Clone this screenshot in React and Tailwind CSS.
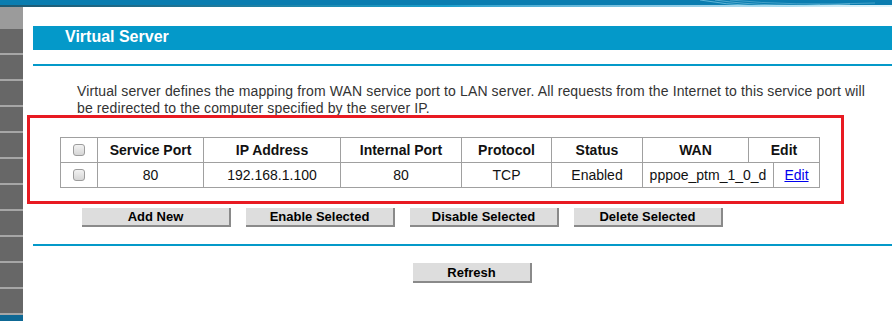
import React from "react";

const headCols = [
  { w: "w-[37px]", label: null },
  { w: "w-[106px]", label: "Service Port" },
  { w: "w-[137px]", label: "IP Address" },
  { w: "w-[121px]", label: "Internal Port" },
  { w: "w-[90px]", label: "Protocol" },
  { w: "w-[91px]", label: "Status" },
  { w: "w-[106px]", label: "WAN" },
  { w: "w-[71px]", label: "Edit" },
];

const rowCols = [
  { w: "w-[37px]", label: null },
  { w: "w-[106px]", label: "80" },
  { w: "w-[137px]", label: "192.168.1.100" },
  { w: "w-[121px]", label: "80" },
  { w: "w-[90px]", label: "TCP" },
  { w: "w-[91px]", label: "Enabled" },
  { w: "w-[131px]", label: "pppoe_ptm_1_0_d" },
  { w: "w-[46px]", label: "edit" },
];

const Check = () => (
  <div className="w-[12px] h-[12px] rounded-[3px] border border-[#9c9c9c] bg-gradient-to-b from-[#f2f2f2] to-[#d6d6d6]" />
);

const Cell = ({ w, label, bold }) => (
  <div
    className={`${w} h-[25px] shrink-0 flex items-center justify-center border-r border-b border-[#a0a0a0] text-[14px] text-[#111] ${
      bold ? "font-bold" : ""
    }`}
  >
    {label === null ? (
      <Check />
    ) : label === "edit" ? (
      <a href="#" className="text-[#0000ee] underline">
        Edit
      </a>
    ) : (
      label
    )}
  </div>
);

const Btn = ({ children, w = "w-[149px]", h = "h-[19px]" }) => (
  <button
    className={`${w} ${h} bg-[#dddddd] border-r-2 border-b-2 border-[#8a8a8a] text-[13px] font-bold text-black leading-none flex items-center justify-center`}
  >
    {children}
  </button>
);

const App = () => {
  const sideCells = Array.from({ length: 11 });

  return (
    <div className="w-[892px] h-[321px] relative overflow-hidden bg-white font-['Liberation_Sans',Arial,sans-serif]">
      {/* top banner */}
      <div className="relative h-[7px]">
        <div className="h-[5px] bg-[#0a7db0]" />
        <div className="h-[2px] bg-gradient-to-r from-[#1e5870] via-[#1a9fcc] to-[#e2f5fb]" />
        <svg
          className="absolute left-[690px] top-0"
          width="190"
          height="7"
          viewBox="0 0 190 7"
        >
          <path d="M10 0 Q60 9 130 5" stroke="#8fd6ee" strokeWidth="0.8" fill="none" opacity="0.8" />
          <path d="M25 0 Q80 8 160 4" stroke="#b8e7f6" strokeWidth="0.6" fill="none" opacity="0.7" />
          <path d="M40 0 Q100 6 185 3" stroke="#a8e0f3" strokeWidth="0.6" fill="none" opacity="0.6" />
        </svg>
      </div>

      <div className="flex">
        {/* left menu strip */}
        <div className="w-[23px] shrink-0 flex flex-col">
          <div className="h-[22px] bg-[#9b9b9b]" />
          {sideCells.map((_, i) => (
            <React.Fragment key={i}>
              <div className="h-[24px] bg-[#676767]" />
              <div className="h-[2px] bg-[#a6a6a6]" />
            </React.Fragment>
          ))}
          <div className="h-[10px] bg-[#0e6894]" />
        </div>

        {/* main content */}
        <div className="flex-1 pl-[10px]">
          <div className="mt-[19px] h-[24px] bg-[#0499c9] pl-[32px] text-white font-bold text-[16px] leading-[21px]">
            Virtual Server
          </div>
          <div className="mt-[14px] h-[2px] bg-[#0499c9]" />

          <p className="mt-[17px] pl-[44px] pr-[20px] text-[14px] leading-[17px] tracking-[0.12px] text-[#333]">
            Virtual server defines the mapping from WAN service port to LAN
            server. All requests from the Internet to this service port will be
            redirected to the computer specified by the server IP.
          </p>

          <div className="mt-[20px] ml-[27px] w-[760px] border-t border-l border-[#a0a0a0]">
            <div className="flex">
              {headCols.map((c, i) => (
                <Cell key={i} w={c.w} label={c.label} bold />
              ))}
            </div>
            <div className="flex">
              {rowCols.map((c, i) => (
                <Cell key={i} w={c.w} label={c.label} />
              ))}
            </div>
          </div>

          <div className="mt-[20px] ml-[49px] flex gap-[15px]">
            <Btn>Add New</Btn>
            <Btn>Enable Selected</Btn>
            <Btn>Disable Selected</Btn>
            <Btn>Delete Selected</Btn>
          </div>

          <div className="mt-[17px] h-[2px] bg-[#0499c9]" />

          <div className="mt-[17px] ml-[380px]">
            <Btn w="w-[119px]" h="h-[20px]">
              Refresh
            </Btn>
          </div>
        </div>
      </div>

      {/* red annotation frame */}
      <div className="absolute left-[27px] top-[115px] w-[817px] h-[89px] border-[3px] border-[#e81a22] pointer-events-none" />
    </div>
  );
};

export default App;
